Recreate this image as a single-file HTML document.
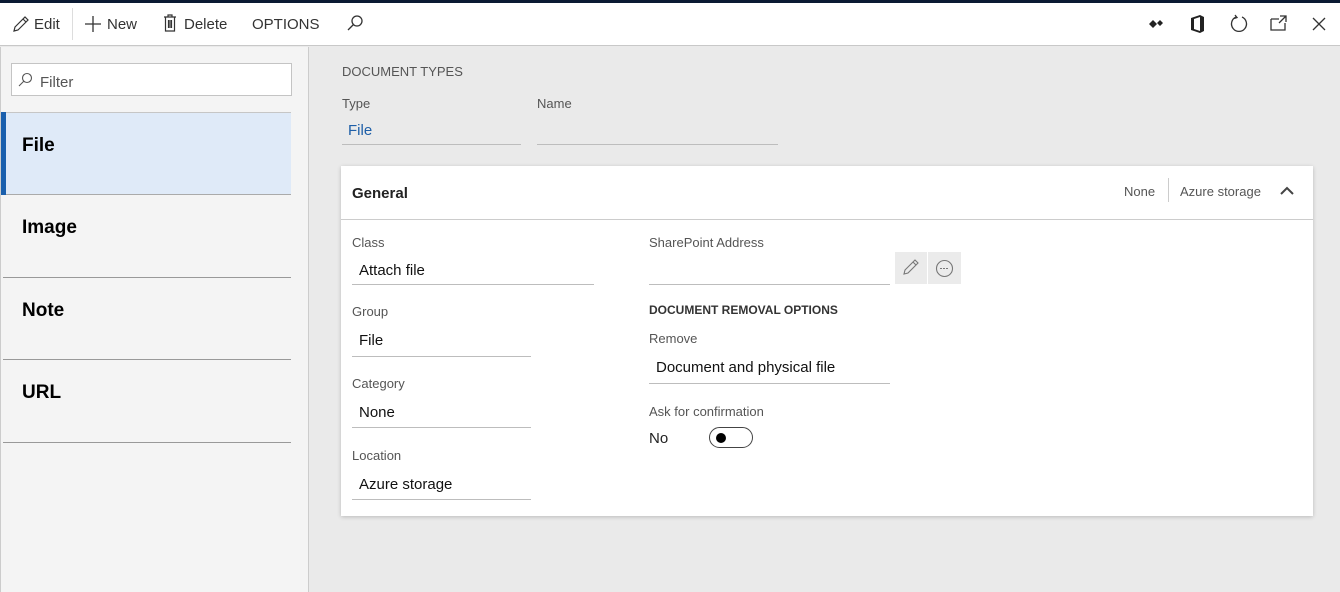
<!DOCTYPE html>
<html><head><style>
*{margin:0;padding:0;box-sizing:border-box}
body{width:1340px;height:592px;overflow:hidden;font-family:"Segoe UI","Liberation Sans",sans-serif;background:#eaeaea;position:relative;color:#000}
.a{position:absolute;white-space:nowrap}
div.a:not(:empty){margin-top:2px}
.lbl{font-size:13px;color:#555}
.val{font-size:15px;color:#111}
.ul{position:absolute;height:1px;background:#bdbdbd}
</style></head><body>
<div class="a" style="left:0;top:0;width:1340px;height:3px;background:#0b1a33"></div>
<div class="a" style="left:0;top:3px;width:1340px;height:43px;background:#fff;border-bottom:1px solid #c8c8c8"></div>
<svg class="a" style="left:12px;top:15px" width="18" height="18" viewBox="0 0 18 18" fill="none" stroke="#333" stroke-width="1.2"><path d="M2 16l1-4L13 2l3 3L6 15z M11 4l3 3"/></svg>
<div class="a val" style="left:34px;top:14px;font-size:15px;color:#333">Edit</div>
<div class="a" style="left:72px;top:8px;width:1px;height:32px;background:#ddd"></div>
<svg class="a" style="left:84px;top:15px" width="18" height="18" stroke="#333" stroke-width="1.3"><path d="M9 1v16M1 9h16"/></svg>
<div class="a val" style="left:107px;top:14px;color:#333">New</div>
<svg class="a" style="left:163px;top:14px" width="14" height="18" fill="none" stroke="#333" stroke-width="1.2"><path d="M1 3h12M5 3V1h4v2M2.5 3v14h9V3M5.5 6v8M7 6v8M8.5 6v8"/></svg>
<div class="a val" style="left:184px;top:14px;color:#333">Delete</div>
<div class="a val" style="left:252px;top:14px;color:#333">OPTIONS</div>
<svg class="a" style="left:346px;top:14px" width="18" height="18" fill="none" stroke="#333" stroke-width="1.3"><circle cx="11" cy="7" r="5"/><path d="M7.5 10.5L2 16"/></svg>
<svg class="a" style="left:1149px;top:17px" width="16" height="14"><path d="M4 3l4 4-4 4-4-4z M11 3l3 3-3 3-3-3z" fill="#222"/></svg>
<svg class="a" style="left:1190px;top:15px" width="15" height="18"><path d="M1 3l9-3 4 2v14l-4 2-9-3z M4 4v10l6 2V2z" fill="#222" fill-rule="evenodd"/></svg>
<svg class="a" style="left:1229px;top:14px" width="20" height="20" fill="none" stroke="#333" stroke-width="1.3"><path d="M7 3A7.5 7.5 0 1 0 13 3"/><path d="M6 1l2 2.5-3 1" /></svg>
<svg class="a" style="left:1270px;top:15px" width="18" height="16" fill="none" stroke="#333" stroke-width="1.3"><path d="M1 4h8M1 4v11h14V8M10 1h6v6M16 1l-7 7"/></svg>
<svg class="a" style="left:1312px;top:17px" width="14" height="14" stroke="#333" stroke-width="1.3"><path d="M1 1l12 12M13 1L1 13"/></svg>

<div class="a" style="left:0;top:47px;width:309px;height:545px;background:#f4f4f4;border-right:1px solid #ccc;border-left:1px solid #ccc"></div>
<div class="a" style="left:11px;top:63px;width:281px;height:33px;background:#fff;border:1px solid #c4c4c4"></div>
<svg class="a" style="left:18px;top:72px" width="15" height="15" fill="none" stroke="#555" stroke-width="1.1"><circle cx="9" cy="6" r="4.5"/><path d="M6 9l-5 5"/></svg>
<div class="a" style="left:40px;top:72px;font-size:15px;color:#555">Filter</div>
<div class="a" style="left:1px;top:112px;width:290px;height:83px;background:#dfeaf8;border-top:1px solid #c6c6c6;border-bottom:1px solid #aaa"></div>
<div class="a" style="left:1px;top:112px;width:5px;height:83px;background:#1a5fad"></div>
<div class="a" style="left:22px;top:133px;font-size:19px;font-weight:600">File</div>
<div class="a" style="left:22px;top:215px;font-size:19px;font-weight:600">Image</div>
<div class="a" style="left:3px;top:277px;width:288px;height:1px;background:#999"></div>
<div class="a" style="left:22px;top:298px;font-size:19px;font-weight:600">Note</div>
<div class="a" style="left:3px;top:359px;width:288px;height:1px;background:#999"></div>
<div class="a" style="left:22px;top:380px;font-size:19px;font-weight:600">URL</div>
<div class="a" style="left:3px;top:442px;width:288px;height:1px;background:#999"></div>

<div class="a lbl" style="left:342px;top:62px;color:#555">DOCUMENT TYPES</div>
<div class="a lbl" style="left:342px;top:94px">Type</div>
<div class="a lbl" style="left:537px;top:94px">Name</div>
<div class="a val" style="left:348px;top:120px;color:#1e5fa8">File</div>
<div class="ul" style="left:342px;top:144px;width:179px"></div>
<div class="ul" style="left:537px;top:144px;width:241px"></div>

<div class="a" style="left:341px;top:166px;width:972px;height:350px;background:#fff;box-shadow:0 1px 4px rgba(0,0,0,.2)"></div>
<div class="a" style="left:352px;top:183px;font-size:15px;font-weight:600;color:#222">General</div>
<div class="a lbl" style="left:1124px;top:182px">None</div>
<div class="a" style="left:1168px;top:178px;width:1px;height:24px;background:#ccc"></div>
<div class="a lbl" style="left:1180px;top:182px">Azure storage</div>
<svg class="a" style="left:1280px;top:186px" width="14" height="10" fill="none" stroke="#444" stroke-width="2"><path d="M1 8l6-6 6 6"/></svg>
<div class="a" style="left:341px;top:219px;width:972px;height:1px;background:#ccc"></div>

<div class="a lbl" style="left:352px;top:233px">Class</div>
<div class="a val" style="left:359px;top:260px">Attach file</div>
<div class="ul" style="left:352px;top:284px;width:242px"></div>
<div class="a lbl" style="left:352px;top:302px">Group</div>
<div class="a val" style="left:359px;top:330px">File</div>
<div class="ul" style="left:352px;top:356px;width:179px"></div>
<div class="a lbl" style="left:352px;top:374px">Category</div>
<div class="a val" style="left:359px;top:402px">None</div>
<div class="ul" style="left:352px;top:427px;width:179px"></div>
<div class="a lbl" style="left:352px;top:446px">Location</div>
<div class="a val" style="left:359px;top:474px">Azure storage</div>
<div class="ul" style="left:352px;top:499px;width:179px"></div>

<div class="a lbl" style="left:649px;top:233px">SharePoint Address</div>
<div class="ul" style="left:649px;top:284px;width:241px"></div>
<div class="a" style="left:895px;top:252px;width:32px;height:32px;background:#ebebeb"></div>
<div class="a" style="left:928px;top:252px;width:33px;height:32px;background:#ebebeb"></div>
<svg class="a" style="left:902px;top:258px" width="18" height="18" fill="none" stroke="#777" stroke-width="1.1"><path d="M2 16l1-4L13 2l3 3L6 15z M11 4l3 3"/></svg>
<svg class="a" style="left:935px;top:259px" width="19" height="19" fill="none" stroke="#777" stroke-width="1.1"><circle cx="9.5" cy="9.5" r="8"/><path d="M5 9.5h9" stroke-dasharray="2 1"/></svg>
<div class="a" style="left:649px;top:301px;font-size:12px;font-weight:700;color:#333">DOCUMENT REMOVAL OPTIONS</div>
<div class="a lbl" style="left:649px;top:329px">Remove</div>
<div class="a val" style="left:656px;top:357px">Document and physical file</div>
<div class="ul" style="left:649px;top:383px;width:241px"></div>
<div class="a lbl" style="left:649px;top:402px">Ask for confirmation</div>
<div class="a val" style="left:649px;top:428px;color:#222">No</div>
<div class="a" style="left:709px;top:427px;width:44px;height:21px;border:1px solid #444;border-radius:11px"></div>
<div class="a" style="left:716px;top:433px;width:10px;height:10px;border-radius:50%;background:#000"></div>
</body></html>
